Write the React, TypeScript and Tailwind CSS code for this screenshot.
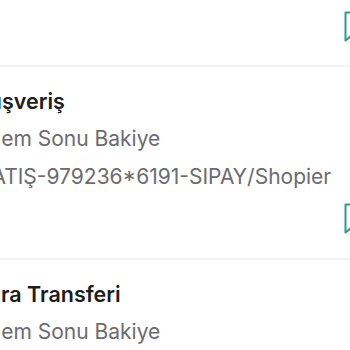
import React from "react";

function Bookmark() {
  return (
    <svg width="24" height="31" viewBox="0 0 24 31" fill="none" className="block shrink-0">
      <path d="M1.5 1.5 H22.5 V29.5 L12 21 L1.5 29.5 Z" stroke="#2a9a93" strokeWidth="2" strokeLinejoin="round" />
    </svg>
  );
}

const titleCls = "h-[38px] leading-[38px] text-[21.5px] font-semibold text-[#1d1d1f] whitespace-nowrap";
const subCls = "h-[38px] leading-[38px] text-[21px] text-[#6b6b70] whitespace-nowrap";

export default function App() {
  return (
    <div className="w-[350px] h-[350px] overflow-hidden bg-white" style={{ fontFamily: "Inter, 'Noto Sans', sans-serif" }}>
      <div className="flex flex-col">
        <div className="flex justify-end pt-[11px] pb-[23px] mr-[-18px]">
          <Bookmark />
        </div>
        <div className="h-[2px] bg-[#f3f3f3]" />
        <div className="pt-[15px]">
          <div className={`${titleCls} ml-[-25px]`}>Alışveriş</div>
          <div className={`${subCls} ml-[-39px]`}>Dönem Sonu Bakiye</div>
          <div className={`${subCls} ml-[-22px]`}>SATIŞ-979236*6191-SIPAY/Shopier</div>
        </div>
        <div className="flex justify-end pt-[7px] pb-[24px] mr-[-18px]">
          <Bookmark />
        </div>
        <div className="h-[2px] bg-[#f3f3f3]" />
        <div className="pt-[15px]">
          <div className={`${titleCls} ml-[-25px]`}>Para Transferi</div>
          <div className={`${subCls} ml-[-39px]`}>Dönem Sonu Bakiye</div>
        </div>
      </div>
    </div>
  );
}
